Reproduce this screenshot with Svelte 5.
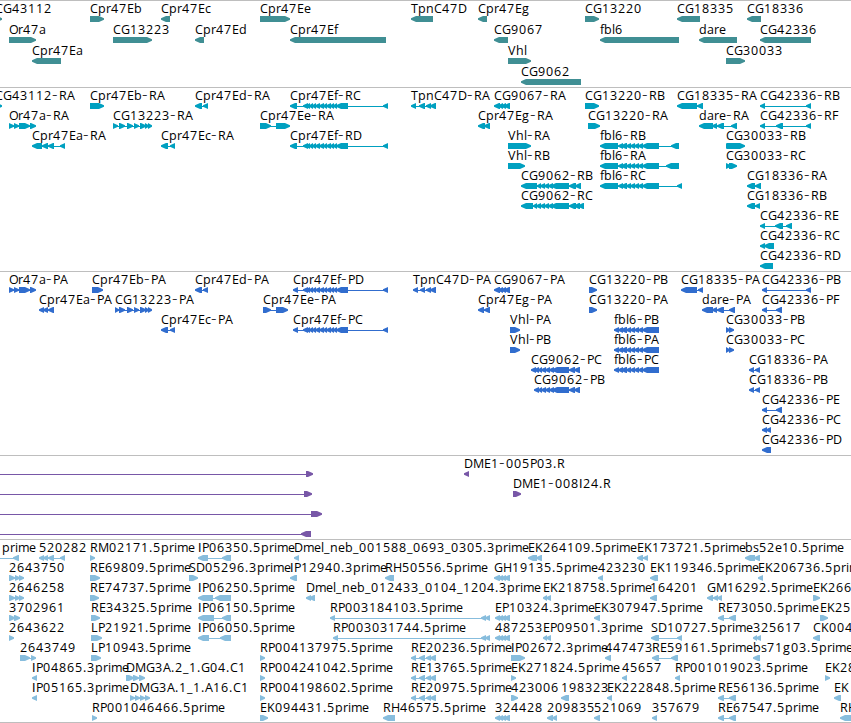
<script lang="ts">
    // one line per feature: name, row, start, strand, exons
    const genes = `
CG43112 0 -5 > -5:2
Or47a 1 9 > 9:36
Cpr47Ea 2 32 < 32:61
Cpr47Eb 0 90 > 90:104
CG13223 1 113 > 113:152
Cpr47Ec 0 161 < 161:170
Cpr47Ed 1 195 < 195:204
Cpr47Ee 0 260 > 260:290
Cpr47Ef 1 290 < 290:386
TpnC47D 0 411 < 411:433
Cpr47Eg 0 478 < 478:487
CG9067 1 494 < 494:508
Vhl 2 508 > 508:531
CG9062 3 521 < 521:581
CG13220 0 585 > 585:599
fbl6 1 600 < 600:679
CG18335 0 677 < 677:700
dare 1 699 < 699:737
CG30033 2 726 > 726:745
CG18336 0 747 < 747:761
CG42336 1 760 < 760:811`;

    const transcripts = `
CG43112-RA 0 -5 > -5:2
Or47a-RA 1 9 > 9:14,14:19,19:30,30:36
Cpr47Ea-RA 2 32 < 32:42,42:48,48:54,60:65
Cpr47Eb-RA 0 90 > 90:104
CG13223-RA 1 113 > 113:118,119:125,127:133,134:139,140:146,145:149,148:152
Cpr47Ed-RA 0 195 < 195:202,203:208
Cpr47Ec-RA 2 161 < 161:168,170:175
Cpr47Ef-RC 0 290 < 290:297,303:308,306:310,309:313,312:316,315:320,319:324,323:327,326:331,330:334,333:337,336:348,383:388
Cpr47Ee-RA 1 260 > 260:271,276:290
Cpr47Ef-RD 2 290 < 290:297,303:308,306:310,309:313,312:316,315:320,319:324,323:327,326:331,330:334,333:337,336:348,383:388
TpnC47D-RA 0 411 < 411:416,419:425,426:431,430:436
CG9067-RA 0 494 < 494:500,498:503,501:506,504:510
Cpr47Eg-RA 1 478 < 478:485,484:490
Vhl-RA 2 508 > 508:531
Vhl-RB 3 508 > 508:525
CG9062-RB 4 521 < 521:537,537:541,540:545,544:549,548:553,551:569,569:576,575:581
CG9062-RC 5 521 < 521:533,533:537,536:541,540:545,544:549,548:553,551:569,569:576,574:580,578:584
CG13220-RB 0 585 > 585:599
CG13220-RA 1 588 > 588:600
fbl6-RB 2 600 < 600:618,618:623,621:627,626:631,630:635,634:639,638:643,642:659,671:679
fbl6-RA 3 600 < 600:618,618:623,621:627,626:631,630:635,634:639,638:643,642:659,666:679
fbl6-RC 4 600 < 600:618,618:623,621:627,626:631,630:635,634:639,638:643,642:659,677:682
CG18335-RA 0 677 < 677:697,697:703
dare-RA 1 699 < 699:713,712:717,717:724,731:737
CG30033-RB 2 726 > 726:730,727:745
CG30033-RC 3 726 > 726:731,729:737
CG18336-RA 4 747 < 747:755,755:761
CG18336-RB 5 747 < 747:755,755:760
CG42336-RB 0 760 < 760:765,806:811
CG42336-RF 1 760 < 760:765,776:783,806:811
CG42336-RE 6 760 < 760:765,775:783,786:792
CG42336-RC 7 760 < 760:765,764:774
CG42336-RD 8 760 < 760:773`;

    const proteins = `
Or47a-PA 0 9 > 9:14,14:19,19:30,30:36
Cpr47Ea-PA 1 39 < 39:44,43:48,48:54
Cpr47Eb-PA 0 92 > 92:103
CG13223-PA 1 115 > 115:119,119:125,127:133,134:139,140:146,145:149,148:152
Cpr47Ed-PA 0 195 < 195:202,203:208
Cpr47Ec-PA 2 161 < 161:168,170:175
Cpr47Ef-PD 0 293 < 293:298,303:308,306:310,309:313,312:316,315:320,319:324,323:327,326:331,330:334,333:337,336:348,383:388
Cpr47Ee-PA 1 263 > 263:271,276:288
Cpr47Ef-PC 2 293 < 293:298,303:308,306:310,309:313,312:316,315:320,319:324,323:327,326:331,330:334,333:337,336:348,383:388
TpnC47D-PA 0 413 < 413:418,420:425,426:431,430:436
CG9067-PA 0 494 < 494:500,498:503,501:506,504:510
Cpr47Eg-PA 1 478 < 478:484,484:490
Vhl-PA 2 510 > 510:520
Vhl-PB 3 510 > 510:520
CG9062-PC 4 531 < 531:536,534:539,538:542,541:546,545:550,549:554,552:569,569:575,574:580
CG9062-PB 5 534 < 534:539,538:542,541:546,545:550,549:554,552:569,569:575,574:580
CG13220-PB 0 589 > 589:597
CG13220-PA 1 589 > 589:597
fbl6-PB 2 614 < 614:619,618:623,621:627,626:631,630:635,634:639,638:643,642:659
fbl6-PA 3 614 < 614:619,618:623,621:627,626:631,630:635,634:639,638:643,642:659
fbl6-PC 4 614 < 614:619,618:623,621:627,626:631,630:635,634:639,638:643,642:659
CG18335-PA 0 681 < 681:697,698:703
dare-PA 1 702 < 702:713,712:717,717:724,729:735
CG30033-PB 2 726 > 726:730,729:734
CG30033-PC 3 726 > 726:730,729:734
CG18336-PA 4 749 < 749:754,755:760
CG18336-PB 5 749 < 749:754,755:760
CG42336-PB 0 762 < 762:767,806:811
CG42336-PF 1 762 < 762:767,776:782
CG42336-PE 6 762 < 762:767,776:782
CG42336-PC 7 762 < 762:767,766:771
CG42336-PD 8 762 < 762:771`;

    // @ is a feature without a label
    const bacs = `
@ 0 0 > -9:-8,306:313
@ 1 0 > -9:-8,304:312
@ 2 0 > -9:-8,311:322
@ 3 0 < -9:-8,301:311
DME1-005P03.R 0 464 < 464:469
DME1-008I24.R 1 513 > 513:521`;

    const ests = `
prime 0 2 < -9:-8,13:19
520282 0 39 < 39:44,43:48,48:54,60:65
RM02171.5prime 0 90 > 90:95
IP06350.5prime 0 198 < 198:208,222:231
Dmel_neb_001588_0693_0305.3prime 0 294 < 294:299
EK264109.5prime 0 528 < 528:537,536:542
EK173721.5prime 0 637 < 637:643,643:648
bs52e10.5prime 0 745 < 745:755,754:760
2643750 1 9 > 9:15,15:20,19:24
RE69809.5prime 1 90 > 90:100
SD05296.3prime 1 189 > 189:198
IP12940.3prime 1 290 < 290:297
RH50556.5prime 1 385 < 385:394
GH19135.5prime 1 494 < 494:500,498:503,501:506,504:510
423230 1 598 < 598:603
EK119346.5prime 1 650 < 650:658
EK206736.5prime 1 758 < 758:763
2646258 2 9 > 9:15,15:20,19:24
RE74737.5prime 2 90 > 90:99
IP06250.5prime 2 198 < 198:213,215:231
Dmel_neb_012433_0104_1204.3prime 2 306 < 306:311,309:315
EK218758.5prime 2 543 < 543:547,546:551
164201 2 650 < 650:657
GM16292.5prime 2 707 < 707:713,713:718,717:722
EK266 2 813 > 813:820
3702961 3 9 > 9:15,14:20
RE34325.5prime 3 91 > 91:100
IP06150.5prime 3 198 < 198:214,222:231
RP003184103.5prime 3 330 < 330:335,481:486,485:490
EP10324.3prime 3 495 < 495:500,498:503,501:506,504:510
EK307947.5prime 3 594 < 594:600
RE73050.5prime 3 718 < 718:724,729:736
EK25 3 820 > 820:828
2643622 4 9 > 9:14
LP21921.5prime 4 91 > 91:102
IP06050.5prime 4 198 < 198:209,220:231
RP003031744.5prime 4 333 < 333:338,481:486,485:490
487253 4 495 < 495:500,498:503,501:506,504:510
EP09501.3prime 4 543 < 543:547,546:551
SD10727.5prime 4 651 < 651:659,677:682
325617 4 753 < 753:757,756:761
CK004 4 813 < 813:820
2643749 5 20 > 20:30,31:36
LP10943.5prime 5 91 > 91:101
RP004137975.5prime 5 260 > 260:265
RE20236.5prime 5 411 < 411:416,419:425,426:431,430:436
IP02672.3prime 5 511 > 511:525
447473 5 605 < 605:611
RE59161.5prime 5 652 < 652:659,671:678
bs71g03.5prime 5 753 < 753:760
IP04865.3prime 6 32 < 32:37
DMG3A.2_1.G04.C1 6 126 > 126:134,133:139,139:145
RP004241042.5prime 6 260 > 260:265
RE13765.5prime 6 411 < 411:416,419:425,426:431,430:436
EK271824.5prime 6 511 > 511:516
45657 6 622 < 622:627
RP001019023.5prime 6 675 < 675:680
EK28 6 825 > 825:830
IP05165.3prime 7 32 < 32:37
DMG3A.1_1.A16.C1 7 130 > 130:135,135:140,140:145,145:150
RP004198602.5prime 7 260 > 260:265
RE20975.5prime 7 411 < 411:416,419:425,426:431,430:436
423006 7 511 > 511:518
198323 7 561 < 561:569
EK222848.5prime 7 607 < 607:612
RE56136.5prime 7 718 < 718:724,729:736
EK 7 834 < 834:841
RP001046466.5prime 8 92 > 92:97
EK094431.5prime 8 260 > 260:268
RH46575.5prime 8 383 < 383:395
324428 8 495 < 495:500,498:503,501:506,504:510
209835 8 547 < 547:553,552:557
521069 8 594 < 594:600
357679 8 652 < 652:657
RE67547.5prime 8 718 < 718:724,729:736
RH 8 840 < 840:856`;

    const tracks = [
        { id: 'genes', height: 87, pitch: 21, items: parse(genes) },
        { id: 'transcripts', height: 184, pitch: 20, items: parse(transcripts) },
        { id: 'proteins', height: 184, pitch: 20, items: parse(proteins) },
        { id: 'bacs', height: 84, pitch: 20, items: parse(bacs) },
        { id: 'ests', height: 183, pitch: 20, items: parse(ests) },
    ];

    function parse(text) {
        return text.trim().split('\n').map((line) => {
            const [name, row, x, strand, exons] = line.split(' ');
            return {
                name: name == '@' ? '' : name,
                row: +row,
                x: +x,
                strand,
                exons: exons.split(',').map((e) => e.split(':').map(Number)),
            };
        });
    }

    // whole pixel advances for the labels, digits are all 8
    const advance = {
        A: 8, B: 7, C: 8, D: 9, E: 7, F: 7, G: 9, H: 9, I: 4, K: 8, L: 7, M: 11, O: 9, P: 7, R: 8, S: 7, T: 7, V: 8,
        a: 7, b: 8, c: 6, d: 8, e: 7, f: 4, g: 8, h: 8, i: 3, l: 3, m: 11, n: 8, p: 8, r: 5, s: 6,
        '-': 7, '.': 4, '_': 6,
    };

    function width(text) {
        return [...text].reduce((sum, c) => sum + (advance[c] ?? 8), 0);
    }

    function letters(text, x) {
        return [...text].map((c, i) => x + width(text.slice(0, i))).join(' ');
    }

    // dash and capital I get a style of their own
    function pieces(item) {
        let x = item.x;
        return item.name.split(/([-I])/).filter(Boolean).map((text) => {
            const piece = { text, x };
            x += width(text);
            return piece;
        });
    }

    function arrow([a, b], strand, y) {
        const tip = Math.min(5, b - a);
        if (strand == '>') {
            return `M${a} ${y}H${b - tip}L${b} ${y + 2.2}V${y + 3.8}L${b - tip} ${y + 6}H${a}Z`;
        }
        return `M${b} ${y}H${a + tip}L${a} ${y + 2.2}V${y + 3.8}L${a + tip} ${y + 6}H${b}Z`;
    }
</script>

<main>
    {#each tracks as track (track.id)}
        <section class="track {track.id}">
            <svg width="851" height={track.height - 1}>
                {#each track.items as item}
                    {@const y = item.row * track.pitch + 15}
                    {#if item.exons.length > 1}
                        <rect x={item.exons[0][0] + 2} y={y + 3} width={item.exons[item.exons.length - 1][1] - item.exons[0][0] - 4} height="1" />
                    {/if}
                    {#each item.exons as exon}
                        <path d={arrow(exon, item.strand, y)} />
                    {/each}
                    {#if item.name}
                        <text y={y - 3}>{#each pieces(item) as piece}<tspan class:dash={piece.text == '-'} class:bar={piece.text == 'I'} x={letters(piece.text, piece.x)}>{piece.text}</tspan>{/each}</text>
                    {/if}
                {/each}
            </svg>
        </section>
    {/each}
</main>

<style>
    :global(body) {
        background: #fff;
    }
    main {
        width: 851px;
        height: 723px;
        box-sizing: border-box;
        border-bottom: 1px solid #bebebe;
        overflow: hidden;
    }
    .track {
        border-top: 1px solid #bebebe;
    }
    svg {
        display: block;
        overflow: hidden;
    }
    text {
        font-family: "Open Sans", "Noto Sans", sans-serif;
        font-size: 12.5px;
        fill: #000;
    }
    .dash {
        font-size: 17px;
        font-weight: 300;
    }
    .bar {
        font-family: "Liberation Sans", sans-serif;
    }
    .genes {
        fill: #408f94;
    }
    .transcripts {
        fill: #00a0c0;
    }
    .proteins {
        fill: #316dce;
    }
    .bacs {
        fill: #7857a7;
    }
    .ests {
        fill: #87bddd;
    }
</style>
